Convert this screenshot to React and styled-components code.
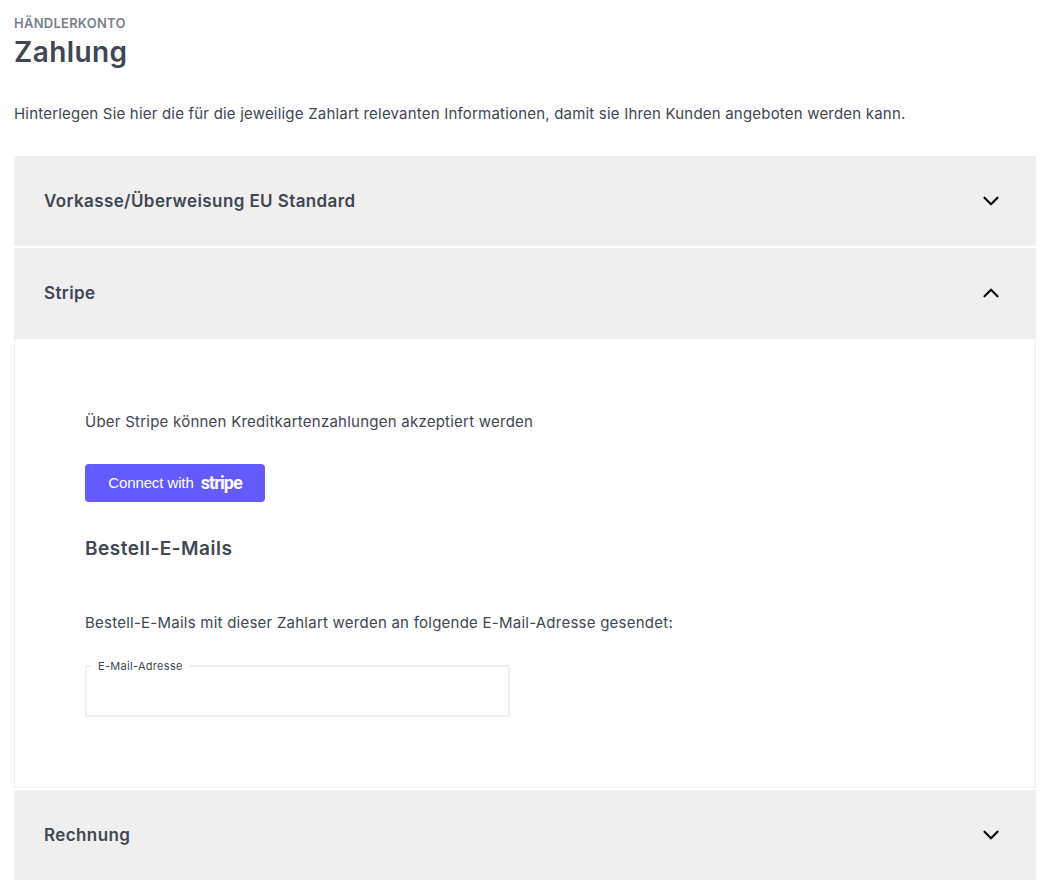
import React from 'react';
import styled, { createGlobalStyle } from 'styled-components';
import { ChevronDown, ChevronUp } from 'lucide-react';

const GlobalStyle = createGlobalStyle`
  html, body {
    margin: 0;
    padding: 0;
    background: #fff;
    font-family: 'Inter', 'Liberation Sans', sans-serif;
    color: #414652;
  }
`;

const Page = styled.div`
  padding: 14px 10px 4px 14px;
`;

const Eyebrow = styled.div`
  font-size: 13px;
  line-height: 18px;
  font-weight: 600;
  letter-spacing: 0.25px;
  color: #7c808c;
`;

const Title = styled.h1`
  margin: 2px 0 0;
  font-size: 28px;
  line-height: 36px;
  font-weight: 600;
  letter-spacing: 0.4px;
  color: #414652;
`;

const Intro = styled.p`
  margin: 34px 0 32px;
  font-size: 15px;
  line-height: 19px;
  padding-bottom: 1px;
  letter-spacing: 0.2px;
`;

const Accordion = styled.div`
  display: flex;
  flex-direction: column;
  gap: 2px;
`;

const Section = styled.section``;

const Head = styled.div`
  height: 90px;
  padding: 0 32px 0 30px;
  padding-bottom: ${(props) => (props.$open ? '1px' : '0')};
  display: flex;
  align-items: center;
  justify-content: space-between;
  background: #efefef;
  font-size: 17px;
  font-weight: 600;
  letter-spacing: 0.4px;
  color: #414652;
  svg {
    color: #000;
  }
`;

const Body = styled.div`
  height: 449px;
  box-sizing: border-box;
  padding: 73px 70px 0;
  border: 1px solid #efefef;
  border-top: 0;
`;

const Text = styled.p`
  margin: 0;
  font-size: 15px;
  line-height: 20px;
  letter-spacing: 0.24px;
`;

const StripeButton = styled.button`
  margin-top: 32px;
  width: 180px;
  height: 38px;
  padding: 0 0 1px;
  display: flex;
  align-items: center;
  justify-content: center;
  gap: 7px;
  border: 0;
  border-radius: 4px;
  background: #635bff;
  color: #fff;
  font-family: 'Liberation Sans', Arial, sans-serif;
  font-size: 15px;
  letter-spacing: -0.1px;
`;

const StripeMark = styled.span`
  font-family: 'Roboto', sans-serif;
  font-size: 18px;
  font-weight: 700;
  letter-spacing: -0.9px;
`;

const SubTitle = styled.h2`
  margin: 35px 0 52px;
  font-size: 19px;
  line-height: 24px;
  font-weight: 600;
  letter-spacing: 0.5px;
`;

const Field = styled.div`
  position: relative;
  margin-top: 32px;
  width: 425px;
  height: 52px;
  box-sizing: border-box;
  border: 2px solid #efefef;
`;

const FieldLabel = styled.label`
  position: absolute;
  left: 4px;
  top: -8px;
  padding: 0 7px;
  background: #fff;
  font-size: 11px;
  line-height: 14px;
  letter-spacing: 0.3px;
`;

const Item = ({ title, open, children }) => (
  <Section>
    <Head $open={open}>
      {title}
      {open ? <ChevronUp size={26} strokeWidth={2} /> : <ChevronDown size={26} strokeWidth={2} />}
    </Head>
    {open && <Body>{children}</Body>}
  </Section>
);

export default function App() {
  return (
    <Page>
      <GlobalStyle />
      <Eyebrow>HÄNDLERKONTO</Eyebrow>
      <Title>Zahlung</Title>
      <Intro>Hinterlegen Sie hier die für die jeweilige Zahlart relevanten Informationen, damit sie Ihren Kunden angeboten werden kann.</Intro>
      <Accordion>
        <Item title="Vorkasse/Überweisung EU Standard" />
        <Item title="Stripe" open>
          <Text>Über Stripe können Kreditkartenzahlungen akzeptiert werden</Text>
          <StripeButton>
            Connect with <StripeMark>stripe</StripeMark>
          </StripeButton>
          <SubTitle>Bestell-E-Mails</SubTitle>
          <Text>Bestell-E-Mails mit dieser Zahlart werden an folgende E-Mail-Adresse gesendet:</Text>
          <Field>
            <FieldLabel>E-Mail-Adresse</FieldLabel>
          </Field>
        </Item>
        <Item title="Rechnung" />
      </Accordion>
    </Page>
  );
}
